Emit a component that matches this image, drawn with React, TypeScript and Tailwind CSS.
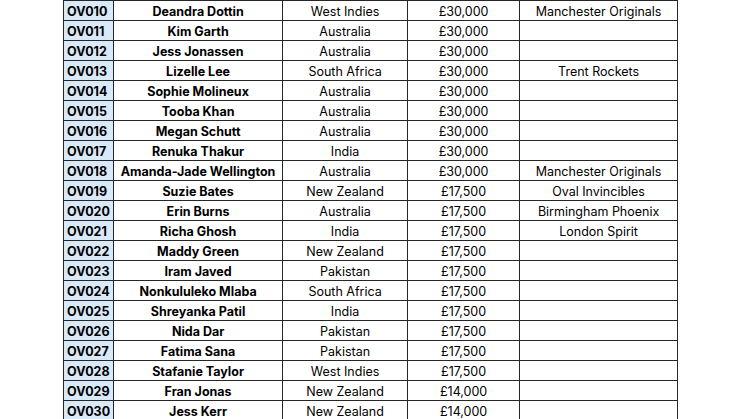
const rows: [string, string, string, string, string][] = [
  ['OV010', 'Deandra Dottin', 'West Indies', '£30,000', 'Manchester Originals'],
  ['OV011', 'Kim Garth', 'Australia', '£30,000', ''],
  ['OV012', 'Jess Jonassen', 'Australia', '£30,000', ''],
  ['OV013', 'Lizelle Lee', 'South Africa', '£30,000', 'Trent Rockets'],
  ['OV014', 'Sophie Molineux', 'Australia', '£30,000', ''],
  ['OV015', 'Tooba Khan', 'Australia', '£30,000', ''],
  ['OV016', 'Megan Schutt', 'Australia', '£30,000', ''],
  ['OV017', 'Renuka Thakur', 'India', '£30,000', ''],
  ['OV018', 'Amanda-Jade Wellington', 'Australia', '£30,000', 'Manchester Originals'],
  ['OV019', 'Suzie Bates', 'New Zealand', '£17,500', 'Oval Invincibles'],
  ['OV020', 'Erin Burns', 'Australia', '£17,500', 'Birmingham Phoenix'],
  ['OV021', 'Richa Ghosh', 'India', '£17,500', 'London Spirit'],
  ['OV022', 'Maddy Green', 'New Zealand', '£17,500', ''],
  ['OV023', 'Iram Javed', 'Pakistan', '£17,500', ''],
  ['OV024', 'Nonkululeko Mlaba', 'South Africa', '£17,500', ''],
  ['OV025', 'Shreyanka Patil', 'India', '£17,500', ''],
  ['OV026', 'Nida Dar', 'Pakistan', '£17,500', ''],
  ['OV027', 'Fatima Sana', 'Pakistan', '£17,500', ''],
  ['OV028', 'Stafanie Taylor', 'West Indies', '£17,500', ''],
  ['OV029', 'Fran Jonas', 'New Zealand', '£14,000', ''],
  ['OV030', 'Jess Kerr', 'New Zealand', '£14,000', ''],
]

// shared cell look: dark grid line, text sits a touch low like Excel
const cell = 'border border-[#262626] pt-[2px] pb-0 leading-[17px]'

export default function App() {
  return (
    <div className="w-[746px] h-[419px] overflow-hidden bg-white pl-[63px] font-['Inter',sans-serif] text-[12.5px] text-black">
      <table className="border-collapse table-fixed">
        <colgroup>
          <col className="w-[50px]" />
          <col className="w-[169px]" />
          <col className="w-[125px]" />
          <col className="w-[112px]" />
          <col className="w-[158px]" />
        </colgroup>
        <tbody>
          {rows.map((r) => (
            <tr key={r[0]} className="h-[20px]">
              <td className={`${cell} bg-[#dae9f8] px-[3px] font-bold`}>{r[0]}</td>
              <td className={`${cell} text-center font-bold`}>{r[1]}</td>
              <td className={`${cell} text-center`}>{r[2]}</td>
              <td className={`${cell} text-center`}>{r[3]}</td>
              <td className={`${cell} text-center`}>{r[4]}</td>
            </tr>
          ))}
        </tbody>
      </table>
    </div>
  )
}
